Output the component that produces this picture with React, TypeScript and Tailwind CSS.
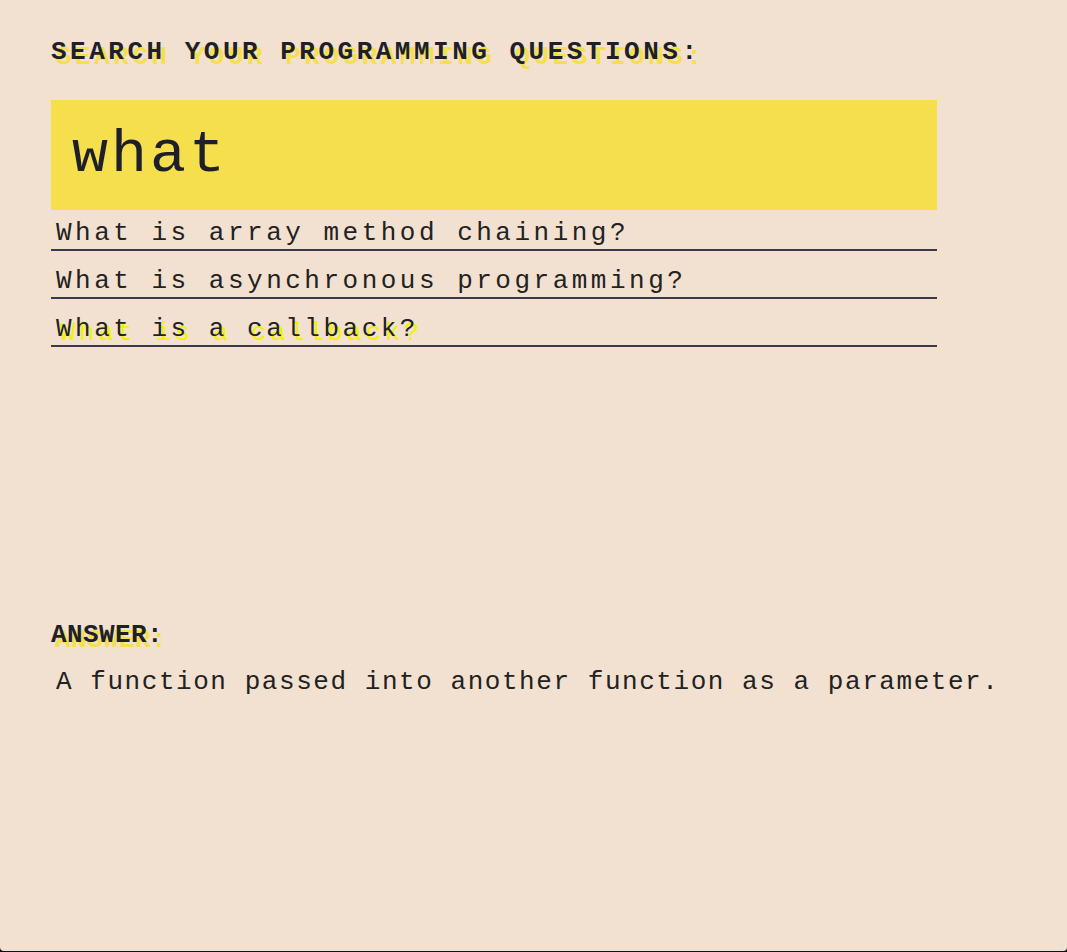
import { useState } from 'react';

const QUESTIONS = [
  { q: 'What is array method chaining?', a: 'Calling several array methods one after another on the same value.' },
  { q: 'What is asynchronous programming?', a: 'Code that keeps running while it waits for slow work to finish.' },
  { q: 'What is a callback?', a: 'A function passed into another function as a parameter.' },
];

const mono = "font-['Liberation_Mono','DejaVu_Sans_Mono',monospace]";

export default function App() {
  const [query, setQuery] = useState('what');
  const [selected, setSelected] = useState(2);

  const results = QUESTIONS.filter((item) =>
    item.q.toLowerCase().includes(query.trim().toLowerCase())
  );

  return (
    <div className="h-[952px] bg-[#111111]">
      <div className={`h-[951px] rounded-b-[4px] bg-[#f2e1d1] px-[51px] pt-[37px] text-[#1f1f29] ${mono}`}>
        {/* Search */}
        <h1 className="text-[26px] font-bold leading-[30px] tracking-[3.5px] [text-shadow:5px_5px_0_#f5df4d]">
          SEARCH YOUR PROGRAMMING QUESTIONS:
        </h1>

        <input
          value={query}
          onChange={(e) => setQuery(e.target.value)}
          className="mt-[33px] block h-[110px] w-[886px] bg-[#f5df4d] px-[21px] text-[60px] font-light tracking-[3px] text-[#1f1f29] outline-none"
        />

        <ul className="w-[886px]">
          {results.map((item, i) => (
            <li
              key={item.q}
              onClick={() => setSelected(i)}
              className={`flex h-[48px] cursor-pointer items-end border-b-2 border-[#3a3945] pl-[5px] text-[26px] leading-[32px] tracking-[3.5px] text-[#222] first:h-[41px] ${
                selected === i ? '[text-shadow:4px_4px_0_#f2f200]' : ''
              }`}
            >
              {item.q}
            </li>
          ))}
        </ul>

        {/* Answer */}
        <h2 className="mt-[273px] text-[26px] font-bold leading-[30px] tracking-[0.4px] [text-shadow:4px_5px_0_#f5df4d]">
          ANSWER:
        </h2>
        <p className="mt-[17px] pl-[5px] text-[26px] leading-[30px] tracking-[1.55px] text-[#222]">
          {results[selected]?.a}
        </p>
      </div>
    </div>
  );
}
